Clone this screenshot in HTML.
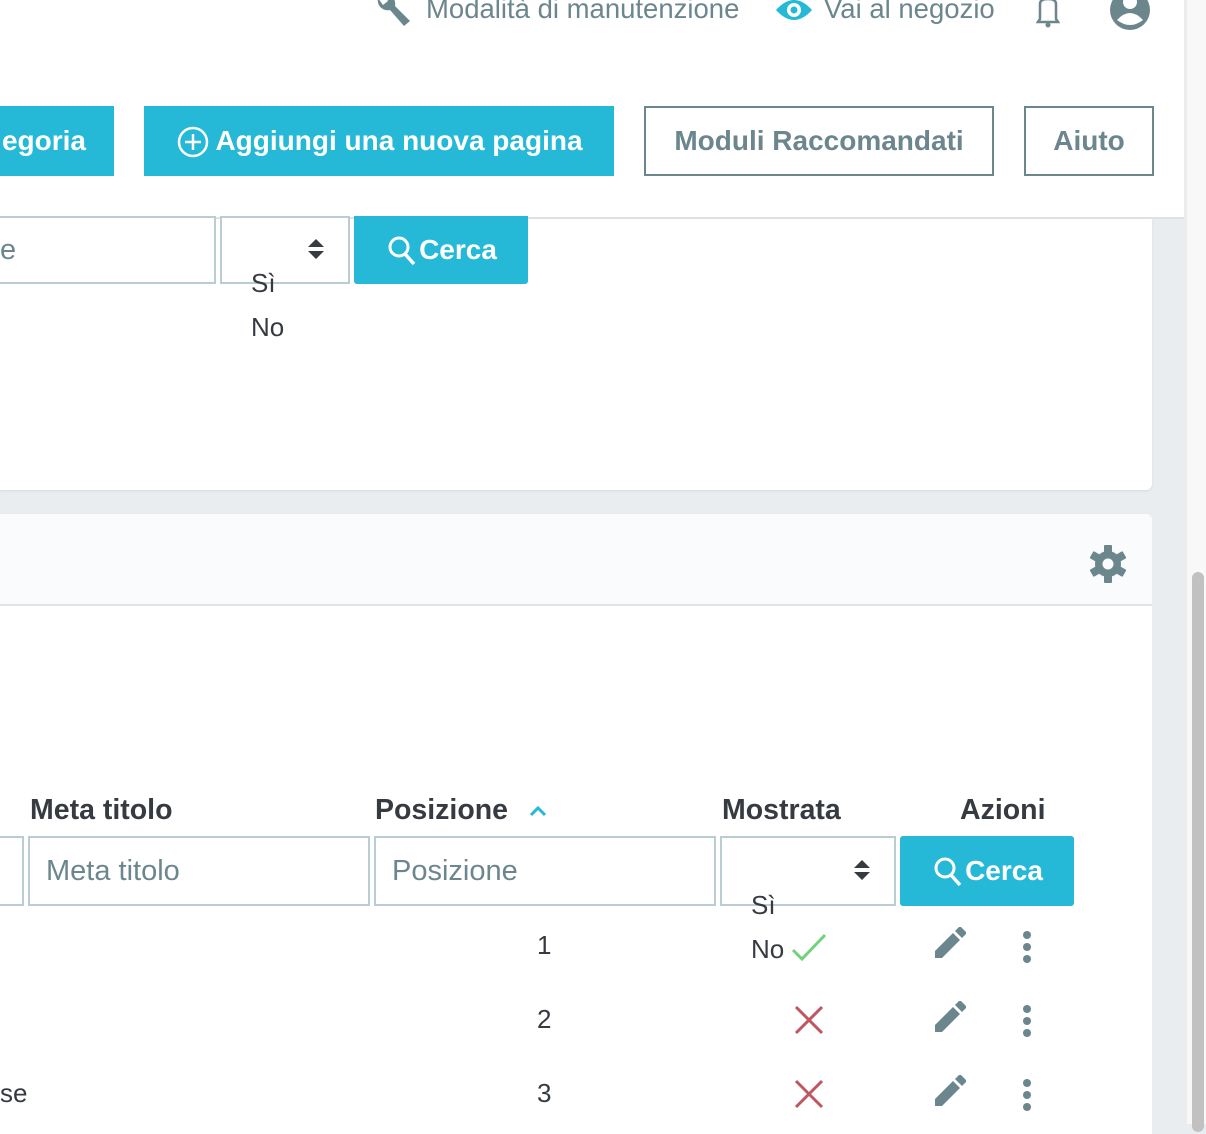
<!DOCTYPE html>
<html><head><meta charset="utf-8"><style>
*{margin:0;padding:0;box-sizing:border-box}
body{width:1206px;height:1124px;overflow:hidden;background:#eaedf0;font-family:"Liberation Sans","DejaVu Sans",sans-serif;position:relative;color:#363a41}
.a{position:absolute;white-space:nowrap}
.hdr{left:0;top:0;width:1184px;height:219px;background:#fff;border-bottom:2px solid #dde2e6}
.nav{font-size:27.5px;color:#6c868e;top:-7px}
.btn{height:70px;top:106px;font-size:28px;line-height:70px;text-align:center}
.pri{background:#25b9d7;color:#fff;font-weight:bold}
.out{border:2px solid #6c868e;color:#6c868e;background:#fff;font-weight:bold}
.inp{border:2px solid #bbcdd2;background:#fff;font-size:29px;color:#6c868e;padding-left:16px}
.th{font-size:28.5px;font-weight:bold;color:#363a41;top:794px}
.td{font-size:26px;color:#363a41}
</style></head><body>
<div class="a hdr"></div>
<svg class="a" style="left:374px;top:-4px" width="40" height="34" viewBox="0 0 40 34"><path d="M4 2 A10 10 0 0 0 16 14 L30 30 L36 25 L21 10 A10 10 0 0 0 10 -2 L14 5 L9 9 Z" fill="#6c868e"/></svg>
<div class="a nav" style="left:426px">Modalità di manutenzione</div>
<svg class="a" style="left:775px;top:-4px" width="38" height="28" viewBox="0 0 38 28"><path d="M1 14 Q19 -6 37 14 Q19 34 1 14Z" fill="#25b9d7"/><circle cx="19" cy="14" r="7" fill="#fff"/><circle cx="19" cy="14" r="3.5" fill="#25b9d7"/></svg>
<div class="a nav" style="left:824px">Vai al negozio</div>
<svg class="a" style="left:1032px;top:-2px" width="32" height="32" viewBox="0 0 32 32"><path d="M6 24 L8 21 L8 6 Q8 1 16 1 Q24 1 24 6 L24 21 L26 24 Z" fill="none" stroke="#6c868e" stroke-width="2.5"/><circle cx="16" cy="27" r="2.5" fill="#6c868e"/></svg>
<svg class="a" style="left:1108px;top:-10px" width="44" height="42" viewBox="0 0 44 42"><circle cx="22" cy="20" r="20" fill="#6c868e"/><circle cx="22" cy="12" r="7" fill="#fff"/><path d="M9 30 Q22 16 35 30 Q22 40 9 30Z" fill="#fff"/></svg>

<div class="a btn pri" style="left:0;width:114px;text-align:right;padding-right:28px">egoria</div>
<div class="a btn pri" style="left:144px;width:470px;padding-left:40px">
<svg style="position:absolute;left:33px;top:20px" width="32" height="32" viewBox="0 0 32 32"><circle cx="16" cy="16" r="14" fill="none" stroke="#fff" stroke-width="2.5"/><path d="M16 8v16M8 16h16" stroke="#fff" stroke-width="2.5"/></svg>Aggiungi una nuova pagina</div>
<div class="a btn out" style="left:644px;width:350px;line-height:66px">Moduli Raccomandati</div>
<div class="a btn out" style="left:1024px;width:130px;line-height:66px">Aiuto</div>

<div class="a" style="left:0;top:219px;width:1152px;height:271px;background:#fff;border-radius:0 0 6px 0;box-shadow:0 1px 2px #d5dadd"></div>
<div class="a inp" style="left:-20px;top:216px;width:236px;height:68px;line-height:64px;padding-left:18px">e</div>
<div class="a inp" style="left:220px;top:216px;width:130px;height:68px"></div>
<svg class="a" style="left:307px;top:238px" width="18" height="22" viewBox="0 0 18 22"><path d="M9 1 L17 9 H1Z M1 13 H17 L9 21Z" fill="#363a41"/></svg>
<div class="a td" style="left:251px;top:268px">Sì</div>
<div class="a td" style="left:251px;top:312px">No</div>
<div class="a btn pri" style="left:354px;top:216px;width:174px;height:68px;line-height:68px;border-radius:0 0 3px 3px;padding-left:34px">
<svg style="position:absolute;left:33px;top:19px" width="30" height="32" viewBox="0 0 30 32"><circle cx="12" cy="12" r="9" fill="none" stroke="#fff" stroke-width="3"/><path d="M18 19 L27 29" stroke="#fff" stroke-width="3.5"/></svg>Cerca</div>

<div class="a" style="left:0;top:514px;width:1152px;height:620px;background:#fff;border-radius:0 6px 0 0;overflow:hidden">
<div style="height:92px;background:#fafbfc;border-bottom:2px solid #dde5e8"></div>
</div>
<svg class="a" style="left:1089px;top:545px" width="38" height="38" viewBox="0 0 38 38"><g fill="#6c868e" transform="translate(19 19)"><circle r="13"/><g id="t"><rect x="-4" y="-19" width="8" height="8" rx="1"/></g><use href="#t" transform="rotate(60)"/><use href="#t" transform="rotate(120)"/><use href="#t" transform="rotate(180)"/><use href="#t" transform="rotate(240)"/><use href="#t" transform="rotate(300)"/></g><circle cx="19" cy="19" r="5.5" fill="#fafbfc"/></svg>

<div class="a th" style="left:30px">Meta titolo</div>
<div class="a th" style="left:375px">Posizione</div>
<svg class="a" style="left:529px;top:804px" width="18" height="14" viewBox="0 0 18 14"><path d="M2 11 L9 4 L16 11" fill="none" stroke="#25b9d7" stroke-width="3"/></svg>
<div class="a th" style="left:722px">Mostrata</div>
<div class="a th" style="left:960px">Azioni</div>

<div class="a inp" style="left:-10px;top:836px;width:34px;height:70px"></div>
<div class="a inp" style="left:28px;top:836px;width:342px;height:70px;line-height:66px">Meta titolo</div>
<div class="a inp" style="left:374px;top:836px;width:342px;height:70px;line-height:66px">Posizione</div>
<div class="a inp" style="left:720px;top:836px;width:176px;height:70px"></div>
<svg class="a" style="left:853px;top:859px" width="18" height="22" viewBox="0 0 18 22"><path d="M9 1 L17 9 H1Z M1 13 H17 L9 21Z" fill="#363a41"/></svg>
<div class="a btn pri" style="left:900px;top:836px;width:174px;height:70px;line-height:70px;border-radius:3px;padding-left:34px">
<svg style="position:absolute;left:33px;top:20px" width="30" height="32" viewBox="0 0 30 32"><circle cx="12" cy="12" r="9" fill="none" stroke="#fff" stroke-width="3"/><path d="M18 19 L27 29" stroke="#fff" stroke-width="3.5"/></svg>Cerca</div>
<div class="a td" style="left:751px;top:890px">Sì</div>
<div class="a td" style="left:751px;top:934px">No</div>

<div class="a td" style="left:537px;top:930px">1</div>
<div class="a td" style="left:537px;top:1004px">2</div>
<div class="a td" style="left:537px;top:1078px">3</div>
<div class="a td" style="left:0;top:1078px">se</div>

<svg class="a" style="left:791px;top:932px" width="36" height="30" viewBox="0 0 36 30"><path d="M2 18 L11 27 L34 3" fill="none" stroke="#70d37a" stroke-width="3"/></svg>
<svg class="a" style="left:794px;top:1005px" width="30" height="30" viewBox="0 0 30 30"><path d="M2 2 L28 28 M28 2 L2 28" stroke="#c05661" stroke-width="3"/></svg>
<svg class="a" style="left:794px;top:1079px" width="30" height="30" viewBox="0 0 30 30"><path d="M2 2 L28 28 M28 2 L2 28" stroke="#c05661" stroke-width="3"/></svg>

<svg class="a" style="left:934px;top:927px" width="32" height="32" viewBox="0 0 32 32"><path d="M1 24 L1 31 L8 31 L26 13 L19 6Z M21 4 L26 -1 L33 6 L28 11Z" fill="#6c868e"/></svg>
<svg class="a" style="left:934px;top:1001px" width="32" height="32" viewBox="0 0 32 32"><path d="M1 24 L1 31 L8 31 L26 13 L19 6Z M21 4 L26 -1 L33 6 L28 11Z" fill="#6c868e"/></svg>
<svg class="a" style="left:934px;top:1075px" width="32" height="32" viewBox="0 0 32 32"><path d="M1 24 L1 31 L8 31 L26 13 L19 6Z M21 4 L26 -1 L33 6 L28 11Z" fill="#6c868e"/></svg>
<svg class="a" style="left:1020px;top:931px" width="14" height="34" viewBox="0 0 14 34"><circle cx="7" cy="4" r="4" fill="#6c868e"/><circle cx="7" cy="16" r="4" fill="#6c868e"/><circle cx="7" cy="28" r="4" fill="#6c868e"/></svg>
<svg class="a" style="left:1020px;top:1005px" width="14" height="34" viewBox="0 0 14 34"><circle cx="7" cy="4" r="4" fill="#6c868e"/><circle cx="7" cy="16" r="4" fill="#6c868e"/><circle cx="7" cy="28" r="4" fill="#6c868e"/></svg>
<svg class="a" style="left:1020px;top:1079px" width="14" height="34" viewBox="0 0 14 34"><circle cx="7" cy="4" r="4" fill="#6c868e"/><circle cx="7" cy="16" r="4" fill="#6c868e"/><circle cx="7" cy="28" r="4" fill="#6c868e"/></svg>

<div class="a" style="left:1186px;top:0;width:20px;height:1124px;background:#f8f8f8;border-left:1px solid #ececec"></div>
<div class="a" style="left:1192px;top:572px;width:12px;height:560px;background:#c1c1c1;border-radius:6px"></div>
</body></html>
